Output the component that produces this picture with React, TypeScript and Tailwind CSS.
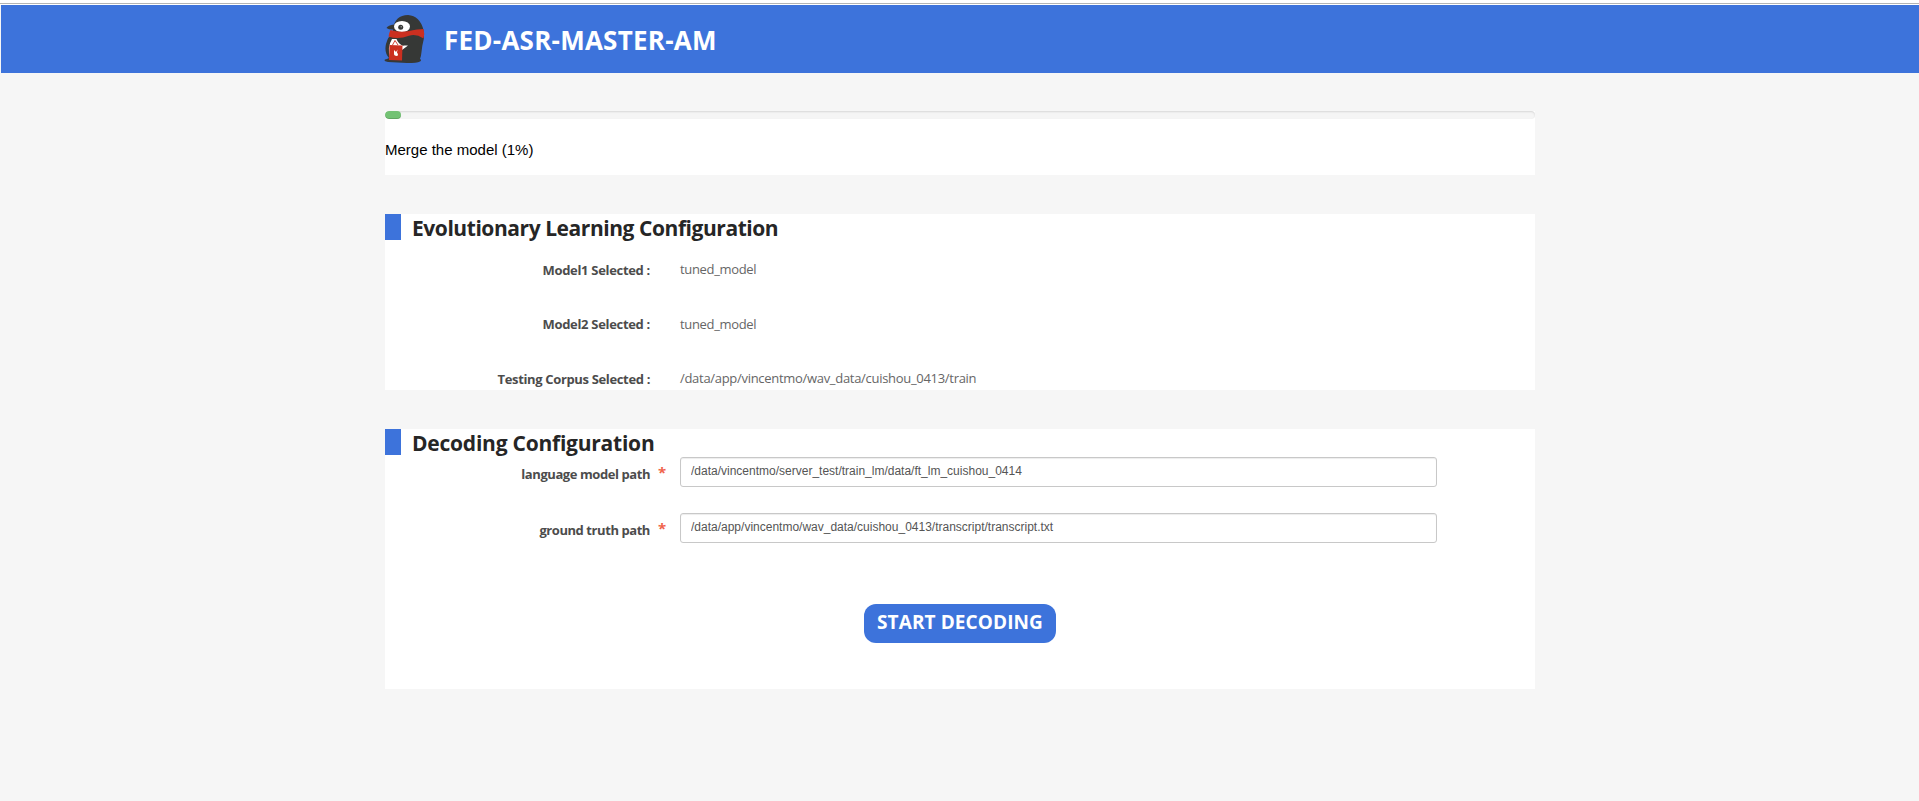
import type { ReactNode } from "react";

function Penguin() {
  return (
    <svg width="42" height="50" viewBox="0 0 42 50" className="shrink-0">
      <path d="M9 15 Q11 1 24 1 Q36 2 39.500 16 L40 24 Q38 32 37.500 38 Q37 43 36 45 Q38 46 36 47.500 Q33 49 23 49 L4 48 Q-1 47 1 45.500 Q3 45 5 44 Q0 38 2 30 Q4 22 9 20 Z" fill="#363836" />
      <path d="M10 10.500 Q4 11 2.500 14 Q5 16 11 15.500 Z" fill="#363836" />
      <ellipse cx="18" cy="12.500" rx="8" ry="5.600" fill="#fff" />
      <circle cx="16.700" cy="13.300" r="2.500" fill="#363836" />
      <circle cx="17.200" cy="12.700" r="0.700" fill="#aaa" />
      <path d="M6.500 16 Q14 18.500 24 17.300 Q34 15 39.500 15 Q41 20 39.500 24.500 Q32 19.500 25 21.800 Q14 26 4.500 22.500 Q5 19 6.500 16 Z" fill="#cb2f20" />
      <path d="M8 25 L12.500 25 Q14 29 18.500 31.500 L24 31.500 L18 36 L6 44 Q3 33 8 25 Z" fill="#fff" />
      <path d="M14 26 Q15 30 19 31.500 L24 29.500 L21 25 Z" fill="#363836" />
      <path d="M5.500 31 L18.500 31.500 L18 46.500 L5 46 Z" fill="#cb2f20" />
      <path d="M8.500 31 L11 26.500 L14 31" fill="none" stroke="#cb2f20" strokeWidth="0.900" />
      <path d="M10 36 L12 38 L13.500 35.500 L13 38.500 Q15 41 13 42 Q9.500 42 10 39 Z" fill="#fff" />
    </svg>
  );
}

function SectionHeading({ children, spacing }: { children: ReactNode; spacing: string }) {
  return (
    <div className="flex h-[26px]">
      <div className="h-[26px] w-4 bg-[#3d73db]" />
      <h2 className={`ml-[11px] whitespace-nowrap text-[21px] leading-7 font-bold text-[#262626] ${spacing}`}>{children}</h2>
    </div>
  );
}

function InfoRow({ label, value, spacing, valueSpacing }: { label: string; value: string; spacing: string; valueSpacing: string }) {
  return (
    <div className="flex h-[18px] items-center text-[13px] leading-[18px]">
      <span className={`w-[265px] pt-px text-right whitespace-nowrap font-bold text-[#4c4c4c] ${spacing}`}>{label}</span>
      <span className={`ml-[30px] whitespace-nowrap text-[#666] ${valueSpacing}`}>{value}</span>
    </div>
  );
}

function FieldRow({ label, value }: { label: string; value: string }) {
  return (
    <div className="flex h-[30px]">
      <label className="mt-2 w-[265px] text-right text-[13px] leading-[18px] tracking-[-0.43px] whitespace-nowrap font-bold text-[#4c4c4c]">{label}</label>
      <span className="mt-[5px] ml-2 w-[22px] text-[15px] leading-5 font-bold text-[#f0644c]">*</span>
      <input
        defaultValue={value}
        className="h-[30px] w-[757px] rounded-[3px] border border-[#c8c8c8] bg-white px-2.5 pb-0.5 font-['Liberation_Sans',Arial,sans-serif] text-[12px] text-[#555] shadow-[inset_0_1px_1px_rgba(0,0,0,0.075)] outline-none"
      />
    </div>
  );
}

export default function App() {
  return (
    <div className="h-[801px] overflow-hidden bg-[#f6f6f6] font-['Open_Sans','Noto_Sans',sans-serif]">
      <div className="h-[5px] bg-white pt-[3px]">
        <div className="h-px bg-[#b4b4b4]" />
      </div>
      <header className="flex h-[68px] border-l border-[#f6f6f6] bg-[#3d73db] pl-[383px]">
        <div className="pt-[9px]"><Penguin /></div>
        <h1 className="ml-[18px] pt-[17px] text-[26px] leading-9 font-bold tracking-[0.24px] whitespace-nowrap text-white">FED-ASR-MASTER-AM</h1>
      </header>
      <main className="ml-[385px] w-[1150px] pt-[38px]">
        <section className="h-16 bg-white">
          <div className="h-2 overflow-hidden rounded-[4px] bg-[#f5f5f5] shadow-[inset_0_1px_2px_rgba(0,0,0,0.12)]">
            <div className="h-2 w-4 rounded-[4px] bg-[#73c274] shadow-[inset_0_-1px_0_rgba(0,0,0,0.15)]" />
          </div>
          <p className="pt-5 font-['Liberation_Sans',Arial,sans-serif] text-[15px] leading-[22px] whitespace-nowrap text-black">Merge the model (1%)</p>
        </section>
        <section className="mt-[39px] h-44 bg-white">
          <SectionHeading spacing="tracking-[-0.44px]">Evolutionary Learning Configuration</SectionHeading>
          <div className="flex flex-col gap-[36.500px] pt-5">
            <InfoRow label="Model1 Selected :" value="tuned_model" spacing="tracking-[-0.31px]" valueSpacing="tracking-[-0.33px]" />
            <InfoRow label="Model2 Selected :" value="tuned_model" spacing="tracking-[-0.31px]" valueSpacing="tracking-[-0.33px]" />
            <InfoRow label="Testing Corpus Selected :" value="/data/app/vincentmo/wav_data/cuishou_0413/train" spacing="tracking-[-0.35px]" valueSpacing="tracking-[-0.3px]" />
          </div>
        </section>
        <section className="mt-[39px] h-[260px] bg-white">
          <SectionHeading spacing="tracking-[-0.23px]">Decoding Configuration</SectionHeading>
          <div className="flex flex-col gap-[26px] pt-0.5">
            <FieldRow label="language model path" value="/data/vincentmo/server_test/train_lm/data/ft_lm_cuishou_0414" />
            <FieldRow label="ground truth path" value="/data/app/vincentmo/wav_data/cuishou_0413/transcript/transcript.txt" />
          </div>
          <div className="mt-[61px] flex justify-center">
            <button className="h-[39px] w-[192px] rounded-[12px] bg-[#3d73db] pb-0.5 text-[19px] leading-none font-bold tracking-[0.1px] whitespace-nowrap text-white">START DECODING</button>
          </div>
        </section>
      </main>
    </div>
  );
}
